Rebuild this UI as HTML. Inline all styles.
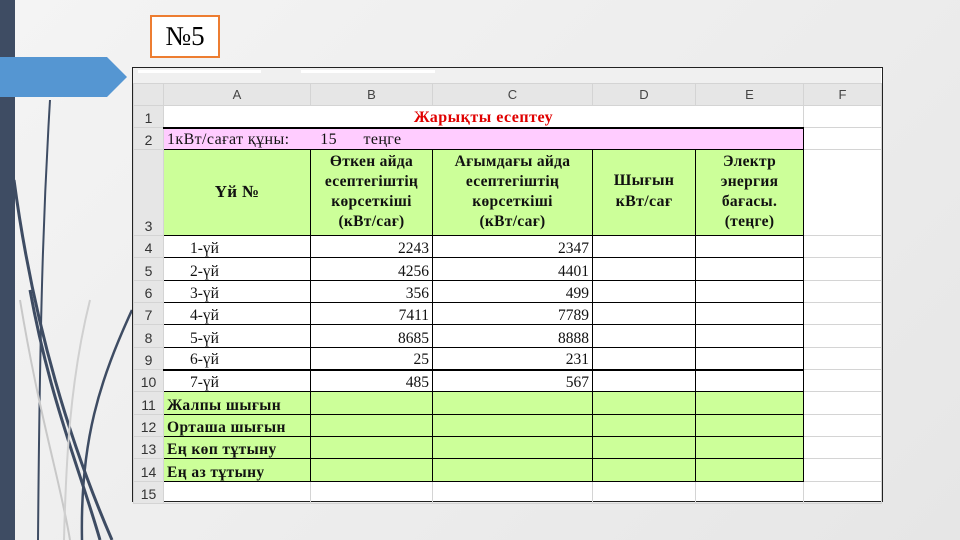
<!DOCTYPE html>
<html><head><meta charset="utf-8"><style>
body{margin:0;width:960px;height:540px;overflow:hidden;background:linear-gradient(135deg,#f4f4f4,#ececec 60%,#e6e6e6);position:relative;font-family:"Liberation Serif",serif}
.abs{position:absolute}
table{border-collapse:collapse;table-layout:fixed;position:absolute;left:133px;top:83px}
td{padding:0 3px 1px 3px;font-size:15.5px;color:#111;border:1px solid #d4d4d4;overflow:hidden;white-space:nowrap;line-height:1;vertical-align:bottom}
td.h{background:#e6e6e6;color:#444;font-family:"Liberation Sans",sans-serif;font-size:13px;text-align:center;vertical-align:middle}
td.n{background:#e6e6e6;color:#333;font-family:"Liberation Sans",sans-serif;font-size:14px;text-align:center;vertical-align:bottom;padding-bottom:2px}
.g{background:#ccff99}
.p{background:#ffccff}
.k{border:1px solid #000}
.b{font-weight:bold}
.r{text-align:right}
.c{text-align:center}
.hd{font-weight:bold;text-align:center;white-space:nowrap;line-height:1.3;font-size:15.5px;vertical-align:middle;letter-spacing:0.3px}
</style></head><body>
<div class="abs" style="left:0;top:0;width:15px;height:540px;background:#3e4c63"></div>
<svg class="abs" style="left:0;top:0" width="140" height="540">
<path d="M50 100 C44 200 40 300 38 540" stroke="#3e4c63" stroke-width="2" fill="none"/>
<path d="M14 180 C30 300 60 420 112 540" stroke="#3e4c63" stroke-width="3" fill="none"/>
<path d="M30 290 C50 400 80 470 100 540" stroke="#3e4c63" stroke-width="3" fill="none"/>
<path d="M132 310 C100 380 80 440 82 540" stroke="#3e4c63" stroke-width="2.5" fill="none"/>
<path d="M20 300 C40 420 60 480 70 540" stroke="#c8c8c8" stroke-width="2" fill="none"/>
<path d="M90 300 C70 380 66 460 64 540" stroke="#d0d0d0" stroke-width="2" fill="none"/>
<path d="M0 57 L107 57 L127 77 L107 97 L40 97 L0 97 Z" fill="#5596d2"/>
</svg>
<div class="abs" style="left:150px;top:15px;width:66px;height:39px;border:2px solid #ed7d31;background:#fff;font-size:27px;text-align:center;line-height:39px">№5</div>
<div class="abs" style="left:132px;top:67px;width:749px;height:433px;border:1px solid #222;background:#fff"></div>
<div class="abs" style="left:133px;top:68px;width:748px;height:15px;background:#f0f0f0"></div>
<div class="abs" style="left:138px;top:70px;width:123px;height:3px;background:#fff"></div>
<div class="abs" style="left:301px;top:70px;width:134px;height:3px;background:#fff"></div>
<table>
<colgroup><col style="width:30px"><col style="width:147px"><col style="width:122px"><col style="width:160px"><col style="width:103px"><col style="width:108px"><col style="width:78px"></colgroup>
<tr style="height:22px"><td class="h"></td><td class="h">A</td><td class="h">B</td><td class="h">C</td><td class="h">D</td><td class="h">E</td><td class="h">F</td></tr>
<tr style="height:22px"><td class="n">1</td><td colspan="5" class="b c" style="color:#e00000;border-bottom:2px solid #000;font-size:16px;letter-spacing:0.5px">Жарықты есептеу</td><td></td></tr>
<tr style="height:22px"><td class="n">2</td><td colspan="5" class="p k" style="font-size:16px;letter-spacing:0.4px">1кВт/сағат құны: &nbsp; &nbsp; &nbsp; 15 &nbsp; &nbsp; &nbsp;теңге</td><td></td></tr>
<tr style="height:86px"><td class="n">3</td><td class="g k hd" style="font-size:17px">Үй №</td><td class="g k hd">Өткен айда<br>есептегіштің<br>көрсеткіші<br>(кВт/сағ)</td><td class="g k hd">Ағымдағы айда<br>есептегіштің<br>көрсеткіші<br>(кВт/сағ)</td><td class="g k hd" style="font-size:16px">Шығын<br>кВт/сағ</td><td class="g k hd">Электр<br>энергия<br>бағасы.<br>(теңге)</td><td></td></tr>
<tr style="height:22px"><td class="n">4</td><td class="k" style="padding-left:26px">1-үй</td><td class="k r">2243</td><td class="k r">2347</td><td class="k"></td><td class="k"></td><td></td></tr>
<tr style="height:23px"><td class="n">5</td><td class="k" style="padding-left:26px">2-үй</td><td class="k r">4256</td><td class="k r">4401</td><td class="k"></td><td class="k"></td><td></td></tr>
<tr style="height:22px"><td class="n">6</td><td class="k" style="padding-left:26px">3-үй</td><td class="k r">356</td><td class="k r">499</td><td class="k"></td><td class="k"></td><td></td></tr>
<tr style="height:22px"><td class="n">7</td><td class="k" style="padding-left:26px">4-үй</td><td class="k r">7411</td><td class="k r">7789</td><td class="k"></td><td class="k"></td><td></td></tr>
<tr style="height:23px"><td class="n">8</td><td class="k" style="padding-left:26px">5-үй</td><td class="k r">8685</td><td class="k r">8888</td><td class="k"></td><td class="k"></td><td></td></tr>
<tr style="height:22px"><td class="n">9</td><td class="k" style="padding-left:26px">6-үй</td><td class="k r">25</td><td class="k r">231</td><td class="k"></td><td class="k"></td><td></td></tr>
<tr style="height:22px"><td class="n">10</td><td class="k" style="padding-left:26px;border-top:2px solid #000">7-үй</td><td class="k r" style="border-top:2px solid #000">485</td><td class="k r" style="border-top:2px solid #000">567</td><td class="k" style="border-top:2px solid #000"></td><td class="k" style="border-top:2px solid #000"></td><td></td></tr>
<tr style="height:23px"><td class="n">11</td><td class="g k b" style="letter-spacing:0.4px">Жалпы шығын</td><td class="g k"></td><td class="g k"></td><td class="g k"></td><td class="g k"></td><td></td></tr>
<tr style="height:22px"><td class="n">12</td><td class="g k b" style="letter-spacing:0.4px">Орташа шығын</td><td class="g k"></td><td class="g k"></td><td class="g k"></td><td class="g k"></td><td></td></tr>
<tr style="height:22px"><td class="n">13</td><td class="g k b" style="letter-spacing:0.4px">Ең көп тұтыну</td><td class="g k"></td><td class="g k"></td><td class="g k"></td><td class="g k"></td><td></td></tr>
<tr style="height:23px"><td class="n">14</td><td class="g k b" style="letter-spacing:0.4px">Ең аз тұтыну</td><td class="g k"></td><td class="g k"></td><td class="g k"></td><td class="g k"></td><td></td></tr>
<tr style="height:22px"><td class="n">15</td><td></td><td></td><td></td><td></td><td></td><td></td></tr>
</table>
</body></html>
